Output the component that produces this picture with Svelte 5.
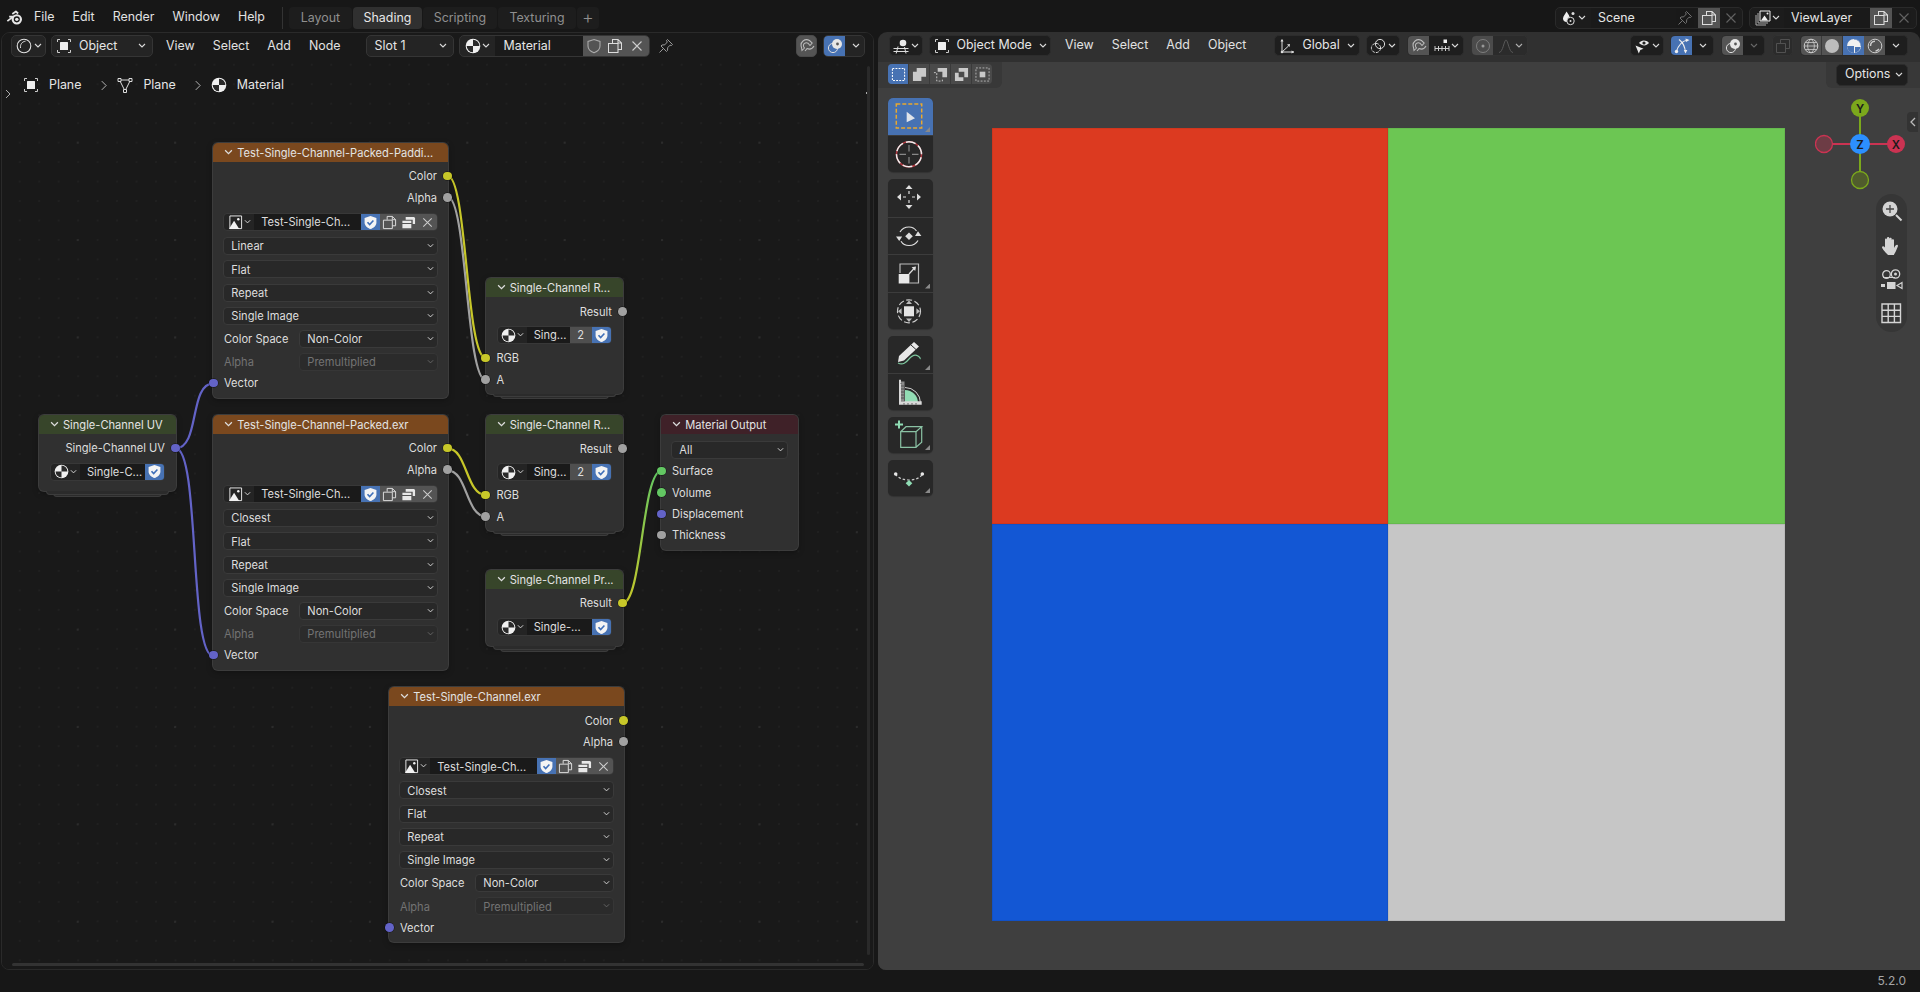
<script>
  const ox = 2, oy = 62;
  const imgRow = { t: 'image', name: 'Test-Single-Ch...' };
  const props = (f) => [
    { t: 'sel', v: f },
    { t: 'sel', v: 'Flat' },
    { t: 'sel', v: 'Repeat' },
    { t: 'sel', v: 'Single Image' },
    { t: 'prop', l: 'Color Space', v: 'Non-Color' },
    { t: 'prop', l: 'Alpha', v: 'Premultiplied', off: true },
    { t: 'in', l: 'Vector', c: 'pu' }
  ];
  const outs = [{ t: 'out', l: 'Color', c: 'ye' }, { t: 'out', l: 'Alpha', c: 'gr' }];
  const nodes = [
    { title: 'Test-Single-Channel-Packed-Paddi...', k: 'tex', x: 213.3, y: 143, w: 234.4, rows: [...outs, imgRow, ...props('Linear')] },
    { title: 'Test-Single-Channel-Packed.exr', k: 'tex', x: 213.3, y: 415, w: 234.4, rows: [...outs, imgRow, ...props('Closest')] },
    { title: 'Test-Single-Channel.exr', k: 'tex', x: 389.3, y: 687.3, w: 234.4, rows: [...outs, imgRow, ...props('Closest')] },
    { title: 'Single-Channel UV', k: 'gnode', x: 39, y: 415, w: 136.7, rows: [
      { t: 'out', l: 'Single-Channel UV', c: 'pu' },
      { t: 'group', name: 'Single-C...' }] },
    { title: 'Single-Channel R...', k: 'gnode', x: 485.7, y: 278.3, w: 137, rows: [
      { t: 'out', l: 'Result', c: 'gr' },
      { t: 'group', name: 'Sing...', n: '2' },
      { t: 'in', l: 'RGB', c: 'ye' }, { t: 'in', l: 'A', c: 'gr' }] },
    { title: 'Single-Channel R...', k: 'gnode', x: 485.7, y: 415.3, w: 137, rows: [
      { t: 'out', l: 'Result', c: 'gr' },
      { t: 'group', name: 'Sing...', n: '2' },
      { t: 'in', l: 'RGB', c: 'ye' }, { t: 'in', l: 'A', c: 'gr' }] },
    { title: 'Single-Channel Pr...', k: 'gnode', x: 485.7, y: 570.2, w: 137, rows: [
      { t: 'out', l: 'Result', c: 'ye' },
      { t: 'group', name: 'Single-...' }] },
    { title: 'Material Output', k: 'outn', x: 661.3, y: 415.3, w: 137, rows: [
      { t: 'sel', v: 'All' },
      { t: 'in', l: 'Surface', c: 'gn' }, { t: 'in', l: 'Volume', c: 'gn' },
      { t: 'in', l: 'Displacement', c: 'pu' }, { t: 'in', l: 'Thickness', c: 'gr' }] }
  ];
  const wires = [
    { d: 'M175.7 448.3C200 448.3 189 383.3 213.3 383.3', s: '#6363c7' },
    { d: 'M175.7 448.3C200 448.3 189 656 213.3 656', s: '#6363c7' },
    { d: 'M447.7 197C467 197 466 380 485.7 380', s: '#a1a1a1' },
    { d: 'M447.7 176C467 176 466 358 485.7 358', s: '#c7c729' },
    { d: 'M447.7 470.3C467 470.3 466 516.3 485.7 516.3', s: '#a1a1a1' },
    { d: 'M447.7 448.3C467 448.3 466 495 485.7 495', s: '#c7c729' },
    { d: 'M622.7 603C642 603 642 471 661.3 471', s: 'url(#mix)' }
  ];
  const tools = [
    { h: '', items: [{ i: 't-select', on: true, tri: true }, { i: 't-cursor' }] },
    { h: 'tall', items: [{ i: 't-move' }, { i: 't-rotate' }, { i: 't-scale', tri: true }, { i: 't-transform' }] },
    { h: '', items: [{ i: 't-annotate', tri: true }, { i: 't-measure' }] },
    { h: 'one', items: [{ i: 't-add', tri: true }] },
    { h: 'one', items: [{ i: 't-curve', tri: true }] }
  ];
</script>

{#snippet ic(name, cls = '')}
  <svg class="ic {cls}"><use href="#{name}" /></svg>
{/snippet}
{#snippet chev(cls = '')}
  <svg class="chev {cls}" viewBox="0 0 8 6"><path d="M1 1l3 3 3-3" fill="none" stroke="currentColor" stroke-width="1.1" /></svg>
{/snippet}

<svg class="defs" width="0" height="0">
  <defs>
    <symbol id="blender" viewBox="0 0 20 20"><circle cx="12" cy="11.5" r="4.6" fill="none" stroke="#e6e6e6" stroke-width="2.4" /><circle cx="12" cy="11.5" r="1.9" fill="#e6e6e6" /><path d="M1.5 13.5L8 8.5H3.5M7 5.5L11 2.8L13.5 5" fill="none" stroke="#e6e6e6" stroke-width="2" stroke-linejoin="round" /></symbol>
    <symbol id="shader" viewBox="0 0 16 16"><circle cx="8" cy="8" r="6.8" fill="none" stroke="#e0e0e0" stroke-width="1.1" /><path d="M4.5 10C4 6.5 6 3.6 9.5 3.2" fill="none" stroke="#e0e0e0" stroke-width="1" /></symbol>
    <symbol id="obj" viewBox="0 0 16 16"><path d="M1.5 4V1.5H4M12 1.5h2.5V4M14.5 12v2.5H12M4 14.5H1.5V12" fill="none" stroke="#ccc" stroke-width="1" /><rect x="4" y="4" width="8" height="8" rx=".6" fill="#eee" /></symbol>
    <symbol id="mesh" viewBox="0 0 16 16"><path d="M2.5 3h11L8 14z" fill="none" stroke="#ddd" stroke-width="1" /><path d="M1 1.5h3v3H1zM12 1.5h3v3h-3zM6.5 12.5h3v3h-3z" fill="#181818" stroke="#ddd" stroke-width="1" /></symbol>
    <symbol id="mat" viewBox="0 0 16 16"><circle cx="8" cy="8" r="7.3" fill="#f0f0f0" /><path d="M8 8V1.700a6.300 6.300 0 0 1 6.300 6.300zM8 8v6.300A6.300 6.300 0 0 1 1.700 8z" fill="#2a2a2a" /></symbol>
    <symbol id="shield" viewBox="0 0 16 16"><path d="M8 1.5l6 2V8c0 3.5-3 5.7-6 6.8C5 13.7 2 11.5 2 8V3.5z" fill="none" stroke="#aaa" stroke-width="1.1" /></symbol>
    <symbol id="shieldc" viewBox="0 0 16 16"><path d="M8 1l6.3 2.2V8c0 3.6-3.2 6-6.3 7-3.1-1-6.3-3.4-6.3-7V3.200z" fill="#f4f4f4" /><path d="M4.800 7.800l2.300 2.500 4-4.400" fill="none" stroke="#3f6fb8" stroke-width="1.700" /></symbol>
    <symbol id="copy" viewBox="0 0 16 16"><path d="M5.500 5V1.500h5.500L14.500 5v6.500H11M1.500 5.500H11v9H1.500z M11 1.500V5h3.500" fill="none" stroke="#ddd" stroke-width="1.050" /></symbol>
    <symbol id="x" viewBox="0 0 16 16"><path d="M3.500 3.500l9 9M12.500 3.500l-9 9" fill="none" stroke="#ccc" stroke-width="1.100" /></symbol>
    <symbol id="pin" viewBox="0 0 16 16"><path d="M9.500 1.500l5 5-1 1-1.500-.3L9.700 9.700l-.2 2.800-1 1-5.500-5.500 1-1 2.800-.2L9.300 4l-.8-1.500zM5.500 10.500L1.500 14.500" fill="none" stroke="#999" stroke-width="1" /></symbol>
    <symbol id="image" viewBox="0 0 16 16"><path d="M2 1h12.500v13.500H2z" fill="none" stroke="#eee" stroke-width="1" /><path d="M1 15L6.500 6 12 15z" fill="#f2f2f2" /><circle cx="11" cy="4.500" r="1.300" fill="#f2f2f2" /></symbol>
    <symbol id="pack" viewBox="0 0 16 16"><path d="M5 2h8.500l1.500 1v6.500h-2.500V5H5zM1.500 6H11v2.500H1.500zM1.500 9.500H11V14H1.500z" fill="#e8e8e8" /></symbol>
    <symbol id="scene" viewBox="0 0 16 16"><path d="M5.500 1.500C7 4 9 6 9 9c0 2-1.500 3-3.500 3S2 10.500 2 8.500C2 6 4.500 4 5.500 1.500z" fill="#eee" /><circle cx="9.500" cy="11" r="3.700" fill="#181818" stroke="#ddd" stroke-width="1" /><circle cx="9.500" cy="11" r="1" fill="#ddd" /><circle cx="12" cy="3.500" r="1.500" fill="#ddd" /></symbol>
    <symbol id="layer" viewBox="0 0 16 16"><path d="M1 5v10h10M3 3v10h10" fill="none" stroke="#aaa" stroke-width="1" /><path d="M5 1h10v10H5z" fill="#222" stroke="#eee" stroke-width="1" /><path d="M6 10.500l3.500-5 3.500 5z" fill="#eee" /><circle cx="12.500" cy="3.500" r="1" fill="#eee" /></symbol>
    <symbol id="view3d" viewBox="0 0 16 16"><circle cx="10" cy="5" r="3.300" fill="#e8e8e8" /><path d="M.5 10.500h15M.5 13.500h15M5 8.500l-1.800 7M11.500 9l1.500 6.500" fill="none" stroke="#ddd" stroke-width="1" /></symbol>
    <symbol id="global" viewBox="0 0 16 16"><path d="M3 14L3 2M3 14h12M3 14L9.500 8" fill="none" stroke="#ddd" stroke-width="1" /><path d="M1.500 3.500L3 .8l1.500 2.700zM12.500 12.500l2.800 1.500-2.800 1.500zM8 6.500l3-.5-.5 3z" fill="#ddd" /><circle cx="3" cy="14" r="1.300" fill="#ddd" /></symbol>
    <symbol id="link" viewBox="0 0 16 16"><circle cx="6" cy="10" r="4.600" fill="none" stroke="#ddd" stroke-width="1" stroke-dasharray="3 1.200" /><circle cx="10" cy="6" r="4.600" fill="none" stroke="#ddd" stroke-width="1" /></symbol>
    <symbol id="magnet" viewBox="0 0 16 16"><path d="M3 12.500L5.500 10 4.800 9C3.500 6 6.500 3.800 9 5.200L11 7.500 13.200 5 10.500 2.500C6 0 .5 4 2.500 9.500zM6 13l2-2.400c2.500 1 5 1 7 -2.600" fill="none" stroke="#bbb" stroke-width="1.050" /></symbol>
    <symbol id="snapinc" viewBox="0 0 16 16"><path d="M1 10.500h14M1 8v5M4.500 8v5M8 8v5M11.500 8v5M15 8v5" fill="none" stroke="#ccc" stroke-width="1" /><rect x="9.500" y="1.500" width="3.500" height="3.500" fill="#eee" /></symbol>
    <symbol id="prop" viewBox="0 0 16 16"><circle cx="8" cy="8" r="6.500" fill="none" stroke="#999" stroke-width="1" /><circle cx="8" cy="8" r="1.500" fill="#bbb" /></symbol>
    <symbol id="falloff" viewBox="0 0 16 16"><path d="M1 14.500C5 14.500 6 2 8 2s3 12.500 7 12.500" fill="none" stroke="#666" stroke-width="1" /></symbol>
    <symbol id="vis" viewBox="0 0 16 16"><path d="M5 5c2-3 7-3.500 10 0-3 3.500-7 3-10 0z" fill="#e8e8e8" /><circle cx="10" cy="5" r="1.600" fill="#222" /><path d="M1.500 7.500l8 3.300-3.200 1.200-1.500 3.500z" fill="#e8e8e8" /></symbol>
    <symbol id="gizmo" viewBox="0 0 16 16"><path d="M2 14.500C5 5 9 2.500 14 2M5 1.500c4 3 6 7 6.500 13" fill="none" stroke="#eee" stroke-width="1.100" /><path d="M11.500 .6L15.500 2l-3.500 2z" fill="#eee" /><circle cx="2.500" cy="13.500" r="1.700" fill="#eee" /><path d="M9.800 12l1.800 3.500 1.700-3.500z" fill="#eee" /></symbol>
    <symbol id="overlay" viewBox="0 0 16 16"><circle cx="6" cy="10" r="4.600" fill="none" stroke="#ddd" stroke-width="1" /><circle cx="10" cy="6" r="5" fill="#e6e6e6" /><circle cx="10.500" cy="6" r="1.400" fill="#555" /></symbol>
    <symbol id="xray" viewBox="0 0 16 16"><path d="M1.500 5.500h9v9h-9zM5.500 5V1.500h9v9H11" fill="none" stroke="#5d5d5d" stroke-width="1" /></symbol>
    <symbol id="wire" viewBox="0 0 16 16"><circle cx="8" cy="8" r="6.800" fill="none" stroke="#ccc" stroke-width="1" /><path d="M1.200 8h13.600M8 1.200C3.500 4 3.500 12 8 14.800M8 1.200c4.500 2.800 4.500 10.800 0 13.600M2.500 4.500h11M2.500 11.500h11" fill="none" stroke="#ccc" stroke-width=".8" /></symbol>
    <symbol id="solid" viewBox="0 0 16 16"><circle cx="8" cy="8" r="7" fill="#bdbdbd" /></symbol>
    <symbol id="matprev" viewBox="0 0 16 16"><circle cx="8" cy="8" r="7" fill="#f0f0f0" /><path d="M8 8V1a7 7 0 0 1 7 7zM8 8v7a7 7 0 0 1-7-7z" fill="#4772b3" /><path d="M8 1.400a6.600 6.600 0 0 1 6.600 6.600H8z" fill="#f0f0f0" /><path d="M9 9h5.500c-.5 3-3 5.500-5.500 5.800z" fill="#4772b3" /></symbol>
    <symbol id="rend" viewBox="0 0 16 16"><circle cx="8" cy="8" r="6.800" fill="none" stroke="#ccc" stroke-width="1" /><path d="M3.500 8C3.500 5 5.500 3.300 8 3.200M12 11c-1 1.300-2 2-3.500 2" fill="none" stroke="#ccc" stroke-width="1.500" /></symbol>
    <symbol id="m-new" viewBox="0 0 16 16"><path d="M1.500 1.500h13v13h-13z" fill="none" stroke="#fff" stroke-width="1.100" stroke-dasharray="2 1.300" /></symbol>
    <symbol id="m-add" viewBox="0 0 16 16"><path d="M5 1h10v9.500h-5V15H1V5h4z" fill="#c9c9c9" /></symbol>
    <symbol id="m-sub" viewBox="0 0 16 16"><path d="M5 1h10v10h-5V5H5z" fill="#c9c9c9" /><path d="M1 6h3v9h6v-3" fill="none" stroke="#c9c9c9" stroke-dasharray="2 1.500" /></symbol>
    <symbol id="m-inv" viewBox="0 0 16 16"><path d="M5 1h10v10h-4V5H5z" fill="#c9c9c9" /><path d="M1 6h4v5h5v4H1z" fill="#c9c9c9" /></symbol>
    <symbol id="m-and" viewBox="0 0 16 16"><path d="M1 1h14v14H1z" fill="none" stroke="#b5b5b5" stroke-dasharray="2 1.500" /><rect x="5" y="5" width="6" height="6" fill="#c9c9c9" /></symbol>

    <symbol id="t-select" viewBox="0 0 45 36"><path d="M8.300 6h25.400v24H8.300z" fill="none" stroke="#e9a82f" stroke-width="1.500" stroke-dasharray="4 2" /><path d="M18.700 13.700l8.300 6.600-8.300 4z" fill="#dfe3ea" /></symbol>
    <symbol id="t-cursor" viewBox="0 0 45 36"><circle cx="21" cy="18.300" r="12.500" fill="none" stroke="#b03840" stroke-width="1.500" /><circle cx="21" cy="18.300" r="12.500" fill="none" stroke="#eee" stroke-width="1.500" stroke-dasharray="10 3.100" stroke-dashoffset="-3" /><path d="M21 9v6.500M21 21v6.500M11.500 18.300H18M24 18.300h6.500" stroke="#888" stroke-width="1.200" /></symbol>
    <symbol id="t-move" viewBox="0 0 45 36"><path d="M21 6l3.500 4h-7zM21 30l3.500-4h-7zM9 18l4 3.500v-7zM33 18l-4 3.500v-7z" fill="#dedede" /><path d="M21 12v3M21 21v3M15 18h3M24 18h3" stroke="#dedede" stroke-width="1.200" /></symbol>
    <symbol id="t-rotate" viewBox="0 0 45 36"><path d="M21 14.500l3.800 3.800-3.800 3.800-3.800-3.800z" fill="#dedede" /><path d="M12 14c2-3.500 6-5 9-5s5.800 1.500 7.500 4M30 22.500c-2 3.500-5.500 5-9 5-3.300 0-6.500-1.800-8-4.300" fill="none" stroke="#dedede" stroke-width="1.200" /><path d="M27 18l3-4.800 3.400 4.800zM8 18.500l3.200 4.500 3-4.500z" fill="#dedede" /></symbol>
    <symbol id="t-scale" viewBox="0 0 45 36"><path d="M12 18V9h18.500v19H21.500" fill="none" stroke="#bbb" stroke-width="1.200" /><rect x="10.700" y="19" width="10.700" height="9.500" fill="#e8e8e8" /><path d="M21 19l6-6.500" stroke="#ddd" stroke-width="1.200" /><path d="M28 11.500l-.8 4.400-3.600-3.600z" fill="#ddd" /></symbol>
    <symbol id="t-transform" viewBox="0 0 45 36"><circle cx="21" cy="18.300" r="11.500" fill="none" stroke="#ccc" stroke-width="1.200" stroke-dasharray="6 2.500" /><rect x="16" y="13.300" width="10" height="10" fill="#e4e4e4" /><path d="M21 7.500l3 3.600h-6zM21 29l3-3.600h-6zM10 18.300l3.600-3v6zM32 18.300l-3.600-3v6z" fill="#bbb" /></symbol>
    <symbol id="t-annotate" viewBox="0 0 45 36"><path d="M11 20L26 6l5 4.500L16 24.500l-6 1.500z" fill="#e8e8e8" /><path d="M23 9l5 4.500" stroke="#2a2a2a" stroke-width="1" /><path d="M10 27c5 2.500 8-.5 11-4s6-5 9-3 2 3 2 3" fill="none" stroke="#7fc8a0" stroke-width="1.200" /></symbol>
    <symbol id="t-measure" viewBox="0 0 45 36"><path d="M17 16a13 13 0 0 1 13 13H17z" fill="#92dcb4" /><path d="M17 13.500a15.500 15.500 0 0 1 15.500 15.500" fill="none" stroke="#cfcfcf" stroke-width="1" /><path d="M11 5.700h2v21.600h20.700v3.400H11z" fill="#d8d8d8" /><path d="M13 7.500h3.500v19.800H13z" fill="#8a8a8a" /><path d="M13 9v1M13 12h3M13 15h3M13 18h3M13 21h3M13 24h3M16 29v1.700M20 29v1.700M24 29v1.700M28 29v1.700" stroke="#444" stroke-width=".8" /></symbol>
    <symbol id="t-add" viewBox="0 0 45 36"><path d="M11 3.500v8M7 7.500h8" stroke="#8fdcb4" stroke-width="2" /><path d="M12.700 14.700h15.300v15.600H12.700zM12.700 14.700l5.300-5h15.700l-5.700 5M33.700 9.700V25.300L28 30.300" fill="none" stroke="#8ac2a4" stroke-width="1.200" /></symbol>
    <symbol id="t-curve" viewBox="0 0 45 36"><path d="M7.700 14C11 22 31 22 34.300 14" fill="none" stroke="#ccc" stroke-width="1.200" stroke-dasharray="2.500 2" /><circle cx="7.700" cy="14" r="1.800" fill="#e8e8e8" /><circle cx="34.300" cy="14" r="1.800" fill="#e8e8e8" /><path d="M21 20l3.300 3.300-3.300 3.300-3.300-3.300z" fill="#8fdcb4" /></symbol>

    <symbol id="n-zoom" viewBox="0 0 22 22"><circle cx="9" cy="9" r="7.500" fill="#d4d4d4" /><path d="M9 5v8M5 9h8" stroke="#444" stroke-width="1.300" /><path d="M15 15l5.500 5.500" stroke="#d4d4d4" stroke-width="2" /></symbol>
    <symbol id="n-hand" viewBox="0 0 22 22"><path d="M7 20C4 17 1 13.500 1 12c.5-1.200 2-.8 3 .5V4.500c0-1.500 2-1.500 2 0V3c0-1.500 2.300-1.500 2.300 0v.8c0-1.500 2.400-1.500 2.400 0v1.500c0-1.300 2.300-1.300 2.300 0V13c1-1.800 1.800-3.500 3.300-3.300 1 .3.800 1.500 0 3-1 2.500-2 5-3.500 7.300z" fill="#d4d4d4" /></symbol>
    <symbol id="n-cam" viewBox="0 0 22 22"><circle cx="5.500" cy="5.500" r="3.800" fill="none" stroke="#d4d4d4" stroke-width="1.300" /><circle cx="14.500" cy="5" r="4.200" fill="none" stroke="#d4d4d4" stroke-width="1.300" /><circle cx="14.500" cy="5" r="1.500" fill="#d4d4d4" /><path d="M2 8.500h12" stroke="#d4d4d4" /><path d="M6 13h8.500v7H6zM0 15h4v3H0z" fill="#d4d4d4" /><path d="M16 16.500l5-3v6z" fill="none" stroke="#d4d4d4" stroke-width="1.200" /></symbol>
    <symbol id="n-grid" viewBox="0 0 22 22"><path d="M1 1h18.500v18.500H1zM1 7.200h18.500M1 13.400h18.500M7.200 1v18.500M13.400 1v18.500" fill="none" stroke="#d4d4d4" stroke-width="1.400" /></symbol>
  </defs>
</svg>

<div class="app">
  <header class="topbar">
    <span class="logo">{@render ic('blender', 'i18')}</span>
    <nav class="menu top">
      <span>File</span><span>Edit</span><span>Render</span><span>Window</span><span>Help</span>
    </nav>
    <i class="tsep"></i>
    <div class="tabs">
      <span class="w63">Layout</span><span class="w69 act">Shading</span><span class="w74">Scripting</span><span class="w78">Texturing</span><span class="w22 plus">+</span>
    </div>
    <div class="tright">
      <div class="grp dark tall scene">
        <b class="ib w35">{@render ic('scene', 'i16')}{@render chev()}</b>
        <b class="fld w109"><span>Scene</span>{@render ic('pin', 'i16 pinr')}</b>
        <b class="ib w22 gray">{@render ic('copy')}</b>
        <b class="ib w22 dimx">{@render ic('x')}</b>
      </div>
      <div class="grp dark tall layer">
        <b class="ib w34">{@render ic('layer', 'i16')}{@render chev()}</b>
        <b class="fld w88"><span>ViewLayer</span></b>
        <b class="ib w22 gray">{@render ic('copy')}</b>
        <b class="ib w24 dimx">{@render ic('x')}</b>
      </div>
    </div>
  </header>

  <main class="areas">
    <section class="editor nodeed">
      <div class="hdr nh">
        <div class="grp w35"><b class="ib full">{@render ic('shader', 'i16')}{@render chev()}</b></div>
        <div class="grp w102 ml5"><b class="dd full">{@render ic('obj', 'i16')}<span>Object</span>{@render chev('end')}</b></div>
        <nav class="menu h1"><span>View</span><span>Select</span><span>Add</span><span>Node</span></nav>
        <div class="grp w88 slot"><b class="dd full"><span>Slot 1</span>{@render chev('end')}</b></div>
        <div class="grp ml5 mat">
          <b class="ib w35">{@render ic('mat', 'i16')}{@render chev()}</b>
          <b class="fld w88 black"><span>Material</span></b>
          <b class="ib w22 gray">{@render ic('shield')}</b>
          <b class="ib w21 gray">{@render ic('copy')}</b>
          <b class="ib w23 gray">{@render ic('x')}</b>
        </div>
        <span class="pinbtn">{@render ic('pin', 'i16')}</span>
        <div class="grow"></div>
        <div class="grp w21 gray"><b class="ib full">{@render ic('magnet', 'i16')}</b></div>
        <div class="grp ml6 w42">
          <b class="ib w21 blue">{@render ic('overlay', 'i16')}</b>
          <b class="ib w21">{@render chev()}</b>
        </div>
      </div>
      <div class="canvas">
        <nav class="crumbs">
          {@render ic('obj', 'i16')}<span class="c1">Plane</span>
          <svg class="crumbarrow" viewBox="0 0 8 12"><path d="M2 1l5 5-5 5" fill="none" stroke="#ccc" /></svg>
          {@render ic('mesh', 'i16')}<span class="c2">Plane</span>
          <svg class="crumbarrow" viewBox="0 0 8 12"><path d="M2 1l5 5-5 5" fill="none" stroke="#ccc" /></svg>
          {@render ic('mat', 'i16')}<span class="c3">Material</span>
        </nav>
        <svg class="tabl" viewBox="0 0 6 10"><path d="M1 1l4 4-4 4" fill="none" stroke="#aaa" /></svg>
        <svg class="tabr" viewBox="0 0 6 10"><path d="M5 1L1 5l4 4" fill="none" stroke="#aaa" /></svg>

        <svg class="wires" width="872" height="906" viewBox="2 62 872 906">
          <defs>
            <linearGradient id="mix" gradientUnits="userSpaceOnUse" x1="622.700" y1="603" x2="661.300" y2="471">
              <stop offset="0" stop-color="#c7c729" /><stop offset="1" stop-color="#63c763" />
            </linearGradient>
          </defs>
          {#each wires as w}
            <path d={w.d} fill="none" stroke={w.s} stroke-width="2.200" />
          {/each}
        </svg>

        {#each nodes as n}
          <article class="node {n.k}" style="left:{n.x - ox}px;top:{n.y - oy}px;width:{n.w}px">
            <h3 class="nt">{@render chev('nc')}<span>{n.title}</span></h3>
            <div class="body">
              {#each n.rows as r}
                {#if r.t === 'out' || r.t === 'in'}
                  <div class="sock {r.t}"><i class="dot {r.c}"></i><span>{r.l}</span></div>
                {:else if r.t === 'image'}
                  <div class="wid img grp">
                    <b class="ib w30">{@render ic('image', 'i16')}{@render chev()}</b>
                    <b class="fld grow black"><span>{r.name}</span></b>
                    <b class="ib w19 blue">{@render ic('shieldc', 'i16')}</b>
                    <b class="ib w19 gray">{@render ic('copy', 'i16')}</b>
                    <b class="ib w19 gray">{@render ic('pack', 'i16')}</b>
                    <b class="ib w19 gray">{@render ic('x', 'i16')}</b>
                  </div>
                {:else if r.t === 'group'}
                  <div class="wid gtex grp">
                    <b class="ib w29">{@render ic('mat', 'i16')}{@render chev()}</b>
                    <b class="fld grow black"><span>{r.name}</span></b>
                    {#if r.n}<b class="ib w22 count">{r.n}</b>{/if}
                    <b class="ib w19 blue">{@render ic('shieldc', 'i16')}</b>
                  </div>
                {:else if r.t === 'sel'}
                  <div class="wid sel"><span>{r.v}</span>{@render chev()}</div>
                {:else}
                  <div class="wid prop" class:off={r.off}>
                    <label>{r.l}</label>
                    <div class="sel"><span>{r.v}</span>{@render chev()}</div>
                  </div>
                {/if}
              {/each}
            </div>
          </article>
        {/each}

        <i class="hbar"></i><i class="vbar"></i>
      </div>
    </section>

    <section class="editor viewed">
      <div class="hdr vh">
        <div class="grp w34 dark"><b class="ib full">{@render ic('view3d', 'i16')}{@render chev()}</b></div>
        <div class="grp w122 dark ml6"><b class="dd full">{@render ic('obj', 'i16')}<span>Object Mode</span>{@render chev('end')}</b></div>
        <nav class="menu h2"><span>View</span><span>Select</span><span>Add</span><span>Object</span></nav>
        <div class="grp w86 dark global"><b class="dd full">{@render ic('global', 'i16')}<span>Global</span>{@render chev('end')}</b></div>
        <div class="grp w34 dark ml6"><b class="ib full">{@render ic('link', 'i16')}{@render chev()}</b></div>
        <div class="grp dark ml7"><b class="ib w21 gray">{@render ic('magnet', 'i16')}</b><b class="ib w34">{@render ic('snapinc', 'i16')}{@render chev()}</b></div>
        <div class="grp faded ml7"><b class="ib w21 gray">{@render ic('prop', 'i16')}</b><b class="ib w34">{@render ic('falloff', 'i16')}{@render chev()}</b></div>
        <div class="grow"></div>
        <div class="grp w34 dark"><b class="ib full">{@render ic('vis', 'i16')}{@render chev()}</b></div>
        <div class="grp dark ml6"><b class="ib w21 blue">{@render ic('gizmo', 'i16')}</b><b class="ib w21">{@render chev()}</b></div>
        <div class="grp dark ml7"><b class="ib w21 gray">{@render ic('overlay', 'i16')}</b><b class="ib w21 dimx">{@render chev()}</b></div>
        <div class="grp w21 faded ml7"><b class="ib full">{@render ic('xray', 'i16')}</b></div>
        <div class="grp dark ml7">
          <b class="ib w21 gray sepr">{@render ic('wire', 'i16')}</b>
          <b class="ib w21 gray sepr">{@render ic('solid', 'i16')}</b>
          <b class="ib w21 blue">{@render ic('matprev', 'i16')}</b>
          <b class="ib w21 gray">{@render ic('rend', 'i16')}</b>
          <b class="ib w22">{@render chev()}</b>
        </div>
      </div>
      <div class="view">
        <div class="notch nl">
          <div class="grp modes">
            <b class="blue">{@render ic('m-new', 'i16')}</b><b>{@render ic('m-add', 'i16')}</b><b>{@render ic('m-sub', 'i16')}</b><b>{@render ic('m-inv', 'i16')}</b><b>{@render ic('m-and', 'i16')}</b>
          </div>
        </div>
        <div class="notch nr"><div class="grp dark opts"><b class="dd full"><span>Options</span>{@render chev('end')}</b></div></div>

        <div class="quad">
          <i class="red"></i><i class="green"></i><i class="bluei"></i><i class="greyi"></i>
        </div>

        <div class="toolbar">
          {#each tools as g}
            <div class="tgroup {g.h}">
              {#each g.items as t}
                <div class="tool" class:on={t.on} class:tri={t.tri}><svg class="tic"><use href="#{t.i}" /></svg></div>
              {/each}
            </div>
          {/each}
        </div>

        <svg class="gizmo3" width="90" height="92" viewBox="0 0 90 92">
          <path d="M45 46V10M45 46v36" stroke="#7ba81c" stroke-width="2" />
          <path d="M9 46h72" stroke="#cb3352" stroke-width="2" />
          <circle cx="9" cy="46" r="8.500" fill="#6d3c45" stroke="#cb3352" stroke-width="1.300" />
          <circle cx="45" cy="82" r="8.500" fill="#505c2d" stroke="#7ba81c" stroke-width="1.300" />
          <circle cx="81" cy="46" r="9" fill="#cb3352" />
          <circle cx="45" cy="10" r="9" fill="#7ba81c" />
          <circle cx="45" cy="46" r="10" fill="#2c8fff" />
          <text x="81" y="50.500" class="gt">X</text>
          <text x="45" y="14.500" class="gt">Y</text>
          <text x="45" y="50.500" class="gt">Z</text>
        </svg>
        <div class="rtab"><svg viewBox="0 0 6 10"><path d="M5 1L1 5l4 4" fill="none" stroke="#bbb" stroke-width="1.300" /></svg></div>
        <div class="navpill">
          <svg class="nic"><use href="#n-zoom" /></svg>
          <svg class="nic"><use href="#n-hand" /></svg>
          <svg class="nic"><use href="#n-cam" /></svg>
          <svg class="nic"><use href="#n-grid" /></svg>
        </div>
      </div>
    </section>
  </main>

  <footer class="status"><span>5.2.0</span></footer>
</div>

<style>
  :global(body) { margin: 0; background: #171717; }
  .defs { position: absolute; }
  .app {
    width: 1920px; height: 992px; display: flex; flex-direction: column; overflow: hidden;
    background: #171717; color: #e6e6e6;
    font: 12.4px/1 Inter, "Noto Sans", sans-serif;
  }
  b { font-weight: 400; }
  .ic { width: 16px; height: 16px; flex: none; display: block; }
  .chev { width: 8px; height: 6px; flex: none; display: block; color: #d8d8d8; }
  .chev.end { margin-left: auto; }
  .grow { flex: 1 1 0; min-width: 0; }

  .topbar { height: 32px; flex: none; display: flex; align-items: center; padding: 3px 0 0 6px; box-sizing: border-box; position: relative; }
  .logo { width: 18px; height: 18px; margin-right: 10px; }
  .i18 { width: 18px; height: 18px; }
  .menu { display: flex; align-items: center; color: #e2e2e2; }
  .menu span { flex: none; }
  .menu.top { gap: 18px; }
  .tsep { width: 1px; height: 22px; background: #333; margin-left: 17px; margin-right: 6px; }
  .tabs { display: flex; gap: 1px; height: 22px; align-self: flex-start; margin-top: 4px; }
  .tabs span { display: flex; align-items: center; justify-content: center; background: #1d1d1d; color: #8f8f8f; border-radius: 4px; }
  .tabs .act { background: #303030; color: #e8e8e8; }
  .tabs .plus { font-size: 18px; font-weight: 300; }
  .tright { margin-left: auto; display: flex; gap: 6px; padding-right: 3px; align-self: flex-start; margin-top: 4px; }
  .tright .fld { padding-left: 7px; }
  .scene { width: 188px; }
  .layer { width: 168px; }

  .w19 { width: 19px; } .w21 { width: 21px; } .w22 { width: 22px; } .w23 { width: 23px; } .w24 { width: 24px; }
  .w29 { width: 29px; } .w30 { width: 30px; } .w34 { width: 34px; } .w35 { width: 35px; } .w42 { width: 42px; }
  .w63 { width: 63px; } .w69 { width: 69px; } .w74 { width: 74px; } .w78 { width: 78px; } .w86 { width: 86px; }
  .w88 { width: 88px; } .w102 { width: 102px; } .w109 { width: 109px; } .w122 { width: 122.5px; }
  .ml5 { margin-left: 5px; } .ml6 { margin-left: 6px; } .ml7 { margin-left: 7px; }
  .full { flex: 1 1 auto; width: 100%; }

  .grp {
    display: flex; align-items: stretch; height: 22px; flex: none; box-sizing: border-box; overflow: hidden;
    background: #242424; border: 1px solid #353535; border-radius: 5px;
  }
  .grp.dark { background: #1e1e1e; border-color: #2c2c2c; }
  .grp.tall { height: 22px; background: #1c1c1c; border-color: #2a2a2a; }
  .grp.faded { background: #2a2a2a; border-color: #333; opacity: .75; }
  .grp.gray { background: #545454; border-color: #4a4a4a; }
  .ib { display: flex; align-items: center; justify-content: center; gap: 1px; flex: none; box-sizing: border-box; }
  .ib.full { gap: 2px; }
  .gray { background: #545454; }
  .blue { background: #4772b3; }
  .dimx { opacity: .4; background: none; }
  .sepr { border-right: 1px solid #3a3a3a; }
  .dd { display: flex; align-items: center; gap: 7px; padding: 0 6px 0 4px; box-sizing: border-box; white-space: nowrap; }
  .fld { display: flex; align-items: center; padding: 0 9px; box-sizing: border-box; min-width: 0; background: #1a1a1a; justify-content: space-between; white-space: nowrap; }
  .fld.black { background: #1a1a1a; }
  .pinr { color: #888; margin-right: -4px; opacity: .7; }
  .pinbtn { width: 18px; margin-left: 7px; display: flex; justify-content: center; }

  .areas { flex: none; height: 937.500px; display: flex; gap: 4px; padding-left: 1px; }
  .editor { box-sizing: border-box; display: flex; flex-direction: column; border-radius: 9px 9px 8px 8px; overflow: hidden; }
  .nodeed { width: 873px; border: 1px solid #2a2a2a; background: #191919; }
  .viewed { width: 1042px; background: #303030; border-radius: 9px 9px 0 8px; }
  .hdr { height: 29px; flex: none; display: flex; align-items: center; box-sizing: border-box; }
  .nh { padding: 0 8px 3px 9px; background: #191919; }
  .menu.h1 { margin-left: 13px; gap: 18px; }
  .slot { margin-left: 25px; }
  .slot .dd { padding-left: 8px; }
  .vh { height: 30px; padding: 0 12px 3px 10.500px; }
  .vh .grp { height: 21px; }
  .menu.h2 { margin-left: 14px; gap: 18px; }
  .global { margin-left: 28px; }

  .canvas {
    flex: 1; position: relative; overflow: hidden;
    background-color: #191919;
    background-image: radial-gradient(circle, #2c2c2c .7px, transparent 1px), radial-gradient(circle, #232323 .6px, transparent .9px);
    background-size: 97.4px 97.4px, 19.480px 19.480px;
    background-position: 27px 32px, 8px -7px;
  }
  .crumbs { position: absolute; left: 21px; top: 15px; display: flex; align-items: center; }
  .c1 { margin: 0 19px 0 10px; }
  .c2 { margin: 0 18px 0 10px; }
  .c3 { margin-left: 10px; }
  .crumbarrow { width: 7px; height: 11px; margin-right: 10px; flex: none; }
  .tabl { position: absolute; left: 3px; top: 27px; width: 6px; height: 10px; }
  .tabr { position: absolute; right: 2px; top: 26px; width: 6px; height: 10px; }
  .wires { position: absolute; left: 0; top: 0; }
  .hbar { position: absolute; left: 10px; right: 9px; bottom: 2.500px; height: 3px; background: #333; border-radius: 2px; }
  .vbar { position: absolute; right: 3px; top: 4px; bottom: 14px; width: 3px; background: #2a2a2a; border-radius: 2px; }

  .node {
    position: absolute; z-index: 1; box-sizing: border-box;
    background: #303030; border-radius: 5px; box-shadow: 0 0 0 1px #3c3c3c, 0 2px 6px rgba(0,0,0,.35);
    font-size: 11.100px; color: #dedede;
  }
  .nt {
    margin: 0; height: 19px; display: flex; align-items: center; box-sizing: border-box;
    border-radius: 5px 5px 0 0; padding: 1.500px 0 0 11px; font: inherit; color: #e4e4e4;
    white-space: nowrap; overflow: hidden;
  }
  .nc { margin: -2px 4px 0 0; color: #ddd; width: 9px; height: 7px; }
  .tex .nt { background: #7a481e; }
  .gnode .nt { background: #37452a; }
  .outn .nt { background: #3f2128; }
  .gnode::before, .gnode::after {
    content: ""; position: absolute; top: 100%; background: #2b2b2b; border: 1px solid #3c3c3c; border-top: 0;
    border-radius: 0 0 4px 4px; z-index: -1;
  }
  .gnode::before { left: 7px; right: 7px; height: 2.500px; }
  .gnode::after { left: 14px; right: 14px; height: 4.500px; z-index: -2; }

  .body { padding: 3.400px 0 4px; }
  .sock { height: 21.300px; display: flex; align-items: center; position: relative; padding: 1.500px 10.700px 0; box-sizing: border-box; }
  .sock.out { justify-content: flex-end; }
  .dot { position: absolute; width: 8.500px; height: 8.500px; border-radius: 50%; box-shadow: 0 0 0 .5px rgba(0,0,0,.6); top: 6.400px; }
  .sock.out .dot { right: -4.250px; }
  .sock.in .dot { left: -4.250px; }
  .ye { background: #c7c729; } .gr { background: #a1a1a1; } .pu { background: #6363c7; } .gn { background: #63c763; }

  .wid { height: 18px; margin: 5.200px 10px 0; box-sizing: border-box; }
  .gnode .wid { margin-left: 11px; margin-right: 11px; }
  .wid.grp { height: 18px; border-radius: 4px; background: #242424; border-color: #383838; }
  .wid.img + .wid { margin-top: 6px; }
  .wid.gtex { margin-top: 4.200px; }
  .wid.gtex + .sock { margin-top: 3.200px; }
  .wid.gtex:last-child { margin-bottom: 6.400px; }
  .wid + .sock { margin-top: 1.300px; }
  .body > .wid.sel:first-child { margin-top: 3.600px; }
  .sel {
    display: flex; align-items: center; justify-content: space-between; height: 18px; box-sizing: border-box;
    background: #282828; border: 1px solid #3a3a3a; border-radius: 4px; padding: 1.500px 3px 0 7px;
  }
  .sel .chev { margin-top: -1.500px; }
  .prop { display: flex; align-items: center; }
  .prop label { width: 76px; flex: none; padding: 1.500px 0 0 .700px; box-sizing: border-box; }
  .prop .sel { flex: 1; min-width: 0; }
  .off label, .off .sel span { color: #737373; }
  .off .sel { background: #2b2b2b; border-color: #363636; }
  .off .chev { color: #666; }
  .wid .chev { width: 7px; }
  .wid .ib .ic { width: 15px; height: 15px; }
  .wid .fld { padding: 1.500px 7px 0; }
  .count { background: #4f4f4f; padding-top: 1.500px; }

  .view { flex: 1; position: relative; overflow: hidden; background: #3f3f3f; }
  .notch { position: absolute; top: 0; height: 26px; background: #383838; box-sizing: border-box; }
  .nl { left: 0; width: 124px; border-radius: 0 0 6px 0; padding: 2px 0 0 10px; }
  .nr { right: 0; width: 94px; border-radius: 0 0 0 6px; padding: 1.500px 0 0 10px; }
  .modes { width: 104px; height: 20px; background: #4a4a4a; border: 0; border-radius: 4px; }
  .modes b { flex: 1; display: flex; align-items: center; justify-content: center; border-right: 1px solid #3a3a3a; }
  .modes b:last-child { border-right: 0; }
  .modes .ic { width: 15px; height: 15px; }
  .opts { width: 72px; height: 22px; }
  .opts .dd { padding: 0 4px 0 8px; gap: 0; }

  .quad { position: absolute; left: 114px; top: 66px; width: 793px; height: 793px; display: grid; grid-template-columns: 396px 397px; grid-template-rows: 396px 397px; }
  .quad i { display: block; box-shadow: inset 0 0 0 .5px rgba(0,0,0,.12); }
  .red { background: #dc3a20; } .green { background: #6cc653; } .bluei { background: #1357d4; } .greyi { background: #c6c6c6; }

  .toolbar { position: absolute; left: 10px; top: 36px; display: flex; flex-direction: column; gap: 7px; }
  .tgroup { width: 45px; background: #282828; border-radius: 5px; overflow: hidden; box-shadow: 0 1px 1px rgba(0,0,0,.2); }
  .tool { height: 37px; position: relative; border-top: 1px solid #3c3c3c; box-sizing: border-box; }
  .tool:first-child { border-top: 0; }
  .tgroup.tall .tool { height: 37.500px; }
  .tgroup.one .tool { height: 36px; }
  .tool.on { background: #4772b3; }
  .tic { width: 45px; height: 36px; display: block; }
  .tool.tri::after {
    content: ""; position: absolute; right: 3px; bottom: 3px; width: 5px; height: 5px; background: #8a8a8a;
    clip-path: polygon(100% 0, 100% 100%, 0 100%);
  }

  .gizmo3 { position: absolute; left: 937px; top: 36px; }
  .gt { font: 600 11.500px Inter, sans-serif; text-anchor: middle; fill: #1b1b1b; }
  .rtab { position: absolute; right: 2px; top: 50px; width: 11px; height: 20px; background: #333; border-radius: 4px 0 0 4px; display: flex; align-items: center; justify-content: center; }
  .rtab svg { width: 6px; height: 10px; }
  .navpill { position: absolute; left: 998px; top: 132px; width: 31px; height: 137.700px; background: #363636; border-radius: 16px; display: flex; flex-direction: column; align-items: center; justify-content: space-around; box-sizing: border-box; }
  .nic { width: 22px; height: 22px; display: block; }

  .status { flex: 1; display: flex; align-items: center; justify-content: flex-end; padding-right: 14px; color: #a5a5a5; font-size: 12px; }
</style>
